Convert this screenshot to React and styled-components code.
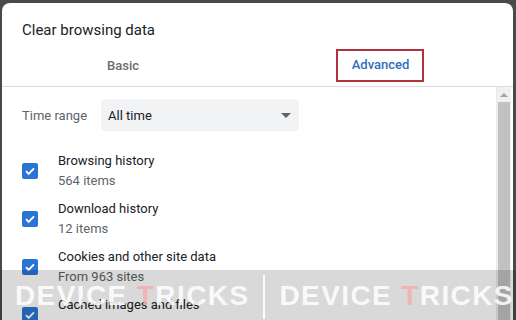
import React from 'react';
import styled, { createGlobalStyle } from 'styled-components';

const GlobalStyle = createGlobalStyle`
  html, body {
    margin: 0;
    padding: 0;
    background: #4a4a4a;
    overflow: hidden;
  }
  body {
    font-family: Roboto, "Liberation Sans", Arial, sans-serif;
  }
`

const Page = styled.div`
  width: 516px;
  height: 320px;
  padding: 3px 3px 0 2px;
  box-sizing: border-box;
  position: relative;
  overflow: hidden;
`

const Dialog = styled.div`
  background: #ffffff;
  border-radius: 8px 8px 0 0;
  height: 317px;
  display: flex;
  flex-direction: column;
  overflow: hidden;
`

const Title = styled.div`
  font-size: 15px;
  line-height: 20px;
  color: #202124;
  padding: 17px 20px 0 20px;
`

const Tabs = styled.div`
  display: grid;
  grid-template-columns: 242px 1fr;
  height: 42px;
  margin-top: 4px;
  border-bottom: 1px solid #dadce0;
`

const Tab = styled.div`
  display: flex;
  align-items: center;
  justify-content: center;
  font-size: 13px;
  font-weight: 500;
  color: ${p => (p.$active ? '#2f6fbe' : '#6a6d71')};
`

// red annotation box drawn round the active tab in the screenshot
const Highlight = styled.span`
  display: inline-block;
  padding: 7px 13px 8px 14px;
  margin-left: 3px;
  border: 2px solid #b1313c;
  line-height: 14px;
`

const Body = styled.div`
  flex: 1;
  display: flex;
  min-height: 0;
`

const Content = styled.div`
  flex: 1;
  padding: 12px 0 0 20px;
`

const TimeRow = styled.div`
  display: flex;
  align-items: center;
  gap: 14px;
  height: 32px;
  margin-bottom: 16px;
`

const Label = styled.span`
  font-size: 13px;
  color: #5f6368;
`

const Select = styled.div`
  width: 198px;
  height: 32px;
  box-sizing: border-box;
  border-radius: 4px;
  background: #f1f3f4;
  display: flex;
  align-items: center;
  justify-content: space-between;
  padding: 0 8px 0 7px;
  font-size: 13px;
  color: #202124;
`

const Caret = styled.span`
  width: 0;
  height: 0;
  border-left: 5px solid transparent;
  border-right: 5px solid transparent;
  border-top: 5px solid #5f6368;
`

const Row = styled.div`
  display: flex;
  align-items: center;
  gap: 20px;
  height: 48px;
`

const Box = styled.span`
  width: 16px;
  height: 16px;
  border-radius: 2px;
  background: #2b74d6;
  display: flex;
  align-items: center;
  justify-content: center;
  flex-shrink: 0;
`

const Texts = styled.div`
  display: flex;
  flex-direction: column;
  font-size: 13px;
  line-height: 20px;
`

const Name = styled.span`
  color: #202124;
`

const Sub = styled.span`
  color: #5f6368;
`

const Scrollbar = styled.div`
  width: 14px;
  margin-right: 2px;
  background: #f1f1f1;
  border-left: 1px solid #e8e8e8;
  display: flex;
  flex-direction: column;
  align-items: center;
`

const Arrow = styled.span`
  margin: 6px 0 5px;
  width: 0;
  height: 0;
  border-left: 4px solid transparent;
  border-right: 4px solid transparent;
  border-bottom: 4px solid #a3a3a3;
`

const Thumb = styled.div`
  width: 12px;
  flex: 1;
  background: #c1c1c1;
`

const Watermark = styled.div`
  position: absolute;
  left: 0;
  right: 0;
  top: 270px;
  bottom: 0;
  background: rgba(0, 0, 0, 0.15);
  display: flex;
  align-items: center;
  padding-left: 15px;
  gap: 14px;
  white-space: nowrap;
  pointer-events: none;
`

const Mark = styled.span`
  font-family: "Liberation Sans", Arial, sans-serif;
  font-weight: 700;
  font-size: 28px;
  letter-spacing: 1.4px;
  color: rgba(255, 255, 255, 0.85);
  margin-top: 2px;
`

const Pink = styled.span`
  color: rgba(244, 175, 175, 0.85);
`

const Divider = styled.span`
  width: 2px;
  height: 44px;
  background: rgba(255, 255, 255, 0.9);
  margin-top: 3px;
`

function Check() {
  return (
    <Box>
      <svg width="12" height="12" viewBox="0 0 12 12">
        <path d="M2 6.2l2.6 2.6L10 3.4" fill="none" stroke="#fff" strokeWidth="1.9" />
      </svg>
    </Box>
  );
}

const items = [
  { name: 'Browsing history', sub: '564 items' },
  { name: 'Download history', sub: '12 items' },
  { name: 'Cookies and other site data', sub: 'From 963 sites' },
  { name: 'Cached images and files', sub: null }
];

export default function App() {
  return (
    <Page>
      <GlobalStyle />
      <Dialog>
        <Title>Clear browsing data</Title>
        <Tabs>
          <Tab>Basic</Tab>
          <Tab $active><Highlight>Advanced</Highlight></Tab>
        </Tabs>
        <Body>
          <Content>
            <TimeRow>
              <Label>Time range</Label>
              <Select>
                All time
                <Caret />
              </Select>
            </TimeRow>
            {items.map(item => (
              <Row key={item.name}>
                <Check />
                <Texts>
                  <Name>{item.name}</Name>
                  {/* last row is cut by the window, so only its title shows */}
                  {item.sub ? <Sub>{item.sub}</Sub> : <Sub>&nbsp;</Sub>}
                </Texts>
              </Row>
            ))}
          </Content>
          <Scrollbar>
            <Arrow />
            <Thumb />
          </Scrollbar>
        </Body>
      </Dialog>
      <Watermark>
        <Mark>DEVICE <Pink>T</Pink>RICKS</Mark>
        <Divider />
        <Mark>DEVICE <Pink>T</Pink>RICKS</Mark>
      </Watermark>
    </Page>
  );
}
